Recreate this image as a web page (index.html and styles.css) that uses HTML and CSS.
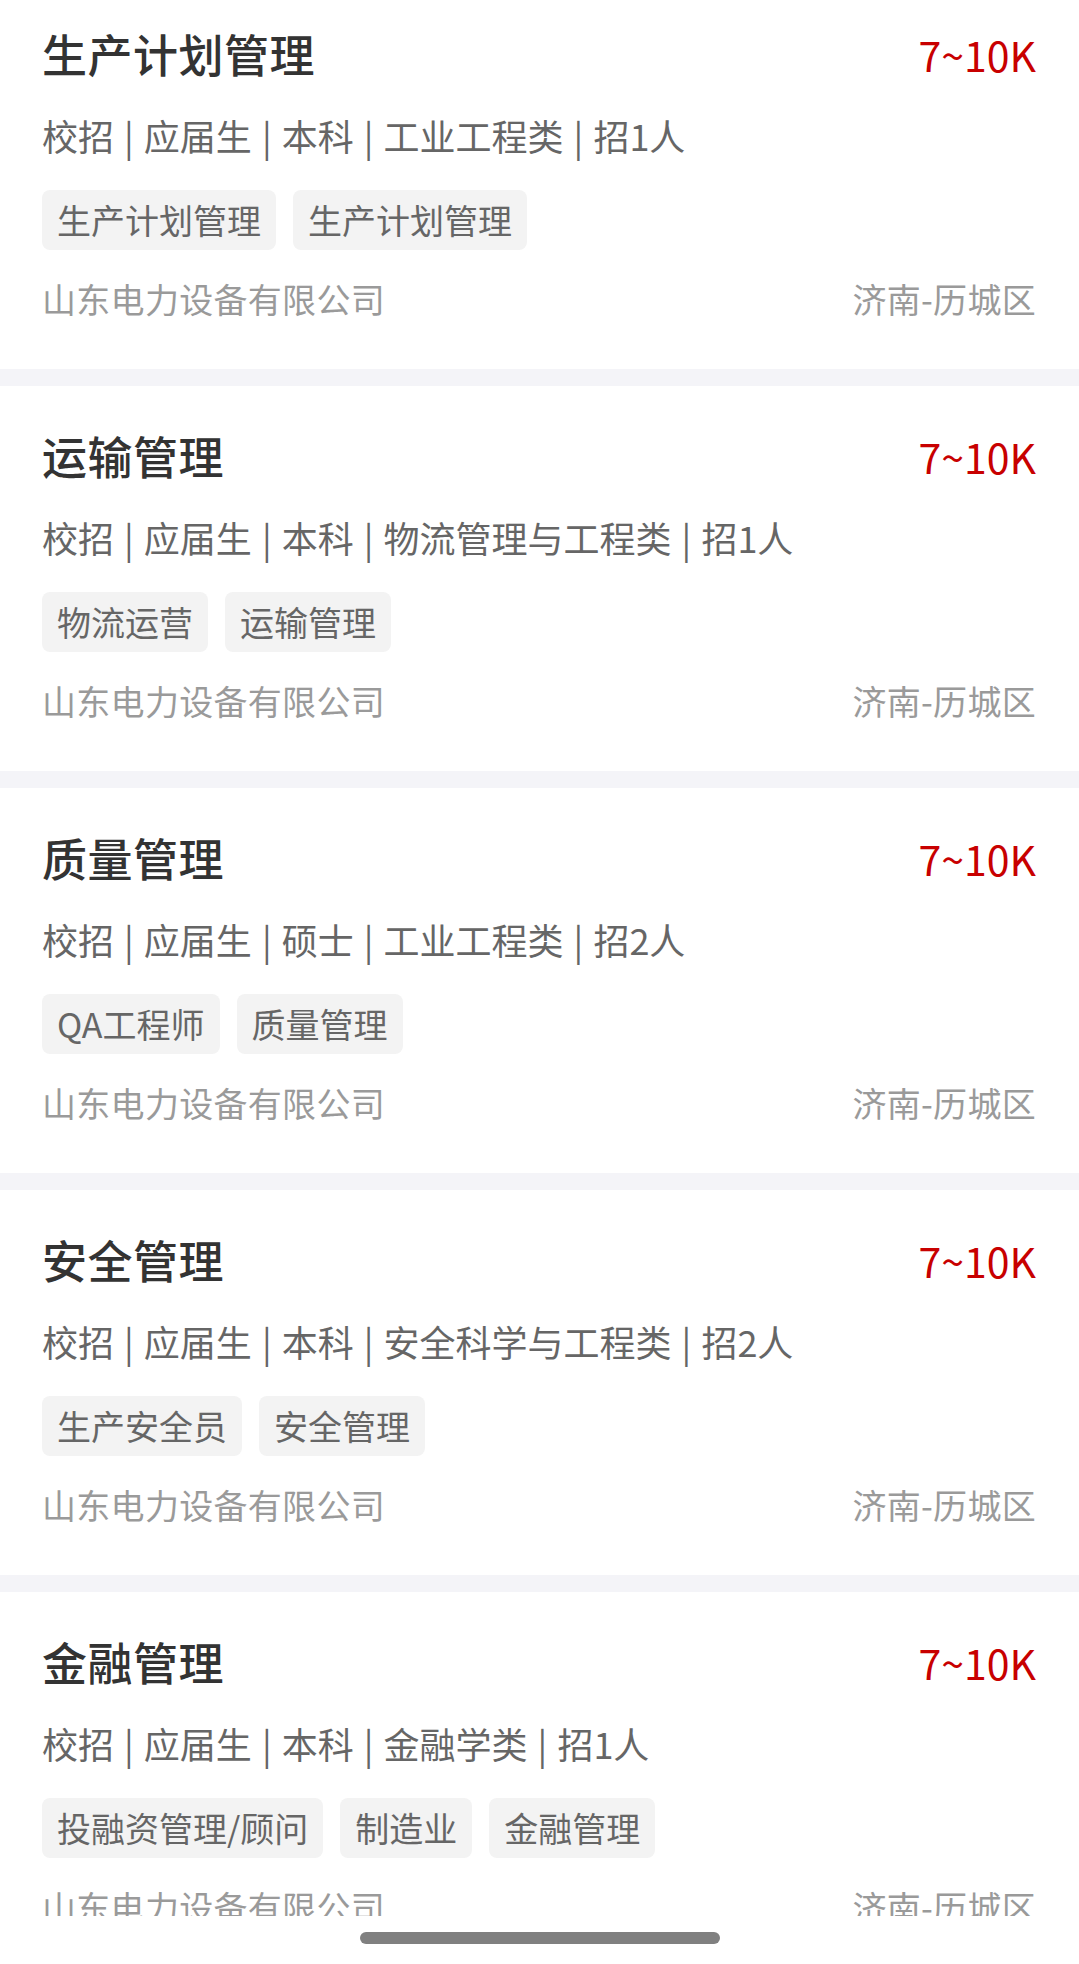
FILE: index.html
```html
<!DOCTYPE html>
<html lang="zh-CN">
<head>
<meta charset="utf-8">
<title>职位列表</title>
<link rel="stylesheet" href="styles.css">
</head>
<body>
<div class="list">
  <div class="card">
    <div class="row">
      <div class="title">生产计划管理</div>
      <div class="salary">7~10K</div>
    </div>
    <div class="meta">校招 | 应届生 | 本科 | 工业工程类 | 招1人</div>
    <div class="tags"><span class="tag">生产计划管理</span><span class="tag">生产计划管理</span></div>
    <div class="row foot">
      <div class="company">山东电力设备有限公司</div>
      <div class="loc">济南-历城区</div>
    </div>
  </div>
  <div class="card">
    <div class="row">
      <div class="title">运输管理</div>
      <div class="salary">7~10K</div>
    </div>
    <div class="meta">校招 | 应届生 | 本科 | 物流管理与工程类 | 招1人</div>
    <div class="tags"><span class="tag">物流运营</span><span class="tag">运输管理</span></div>
    <div class="row foot">
      <div class="company">山东电力设备有限公司</div>
      <div class="loc">济南-历城区</div>
    </div>
  </div>
  <div class="card">
    <div class="row">
      <div class="title">质量管理</div>
      <div class="salary">7~10K</div>
    </div>
    <div class="meta">校招 | 应届生 | 硕士 | 工业工程类 | 招2人</div>
    <div class="tags"><span class="tag">QA工程师</span><span class="tag">质量管理</span></div>
    <div class="row foot">
      <div class="company">山东电力设备有限公司</div>
      <div class="loc">济南-历城区</div>
    </div>
  </div>
  <div class="card">
    <div class="row">
      <div class="title">安全管理</div>
      <div class="salary">7~10K</div>
    </div>
    <div class="meta">校招 | 应届生 | 本科 | 安全科学与工程类 | 招2人</div>
    <div class="tags"><span class="tag">生产安全员</span><span class="tag">安全管理</span></div>
    <div class="row foot">
      <div class="company">山东电力设备有限公司</div>
      <div class="loc">济南-历城区</div>
    </div>
  </div>
  <div class="card">
    <div class="row">
      <div class="title">金融管理</div>
      <div class="salary">7~10K</div>
    </div>
    <div class="meta">校招 | 应届生 | 本科 | 金融学类 | 招1人</div>
    <div class="tags"><span class="tag">投融资管理/顾问</span><span class="tag">制造业</span><span class="tag">金融管理</span></div>
    <div class="row foot">
      <div class="company">山东电力设备有限公司</div>
      <div class="loc">济南-历城区</div>
    </div>
  </div>
</div>
<div class="home-bar"><div class="home-indicator"></div></div>
</body>
</html>
```
FILE: styles.css
```css
html, body {
  margin: 0;
  padding: 0;
  background: #f4f4f8;
}
body {
  width: 1079px;
  height: 1964px;
  overflow: hidden;
  font-family: "Noto Sans CJK SC", "Noto Sans", sans-serif;
  position: relative;
}
.list {
  margin-top: -16px;
  display: flex;
  flex-direction: column;
  gap: 17px;
}
.card {
  background: #fff;
  height: 385px;
  box-sizing: border-box;
  padding: 40px 43px 0 42px;
}
.row {
  display: flex;
  justify-content: space-between;
  align-items: center;
}
.title {
  font-size: 45px;
  line-height: 60px;
  font-weight: 500;
  color: #333;
  letter-spacing: 0.5px;
}
.salary {
  font-size: 41px;
  line-height: 60px;
  color: #c80000;
}
.meta {
  margin-top: 26px;
  font-size: 36px;
  line-height: 50px;
  color: #666;
  word-spacing: 2px;
}
.tags {
  margin-top: 30px;
  display: flex;
  gap: 17px;
}
.tag {
  height: 60px;
  line-height: 60px;
  padding: 0 15px;
  font-size: 34px;
  color: #666;
  background: #f3f3f3;
  border-radius: 8px;
}
.foot {
  margin-top: 25px;
}
.company, .loc {
  font-size: 34px;
  line-height: 48px;
  color: #9a9a9a;
  letter-spacing: 0.3px;
}
.home-bar {
  position: absolute;
  left: 0;
  right: 0;
  bottom: 0;
  height: 48px;
  background: #fff;
  display: flex;
  justify-content: center;
  padding-top: 16px;
  box-sizing: border-box;
}
.home-indicator {
  width: 360px;
  height: 12px;
  border-radius: 6px;
  background: #808080;
}
```
